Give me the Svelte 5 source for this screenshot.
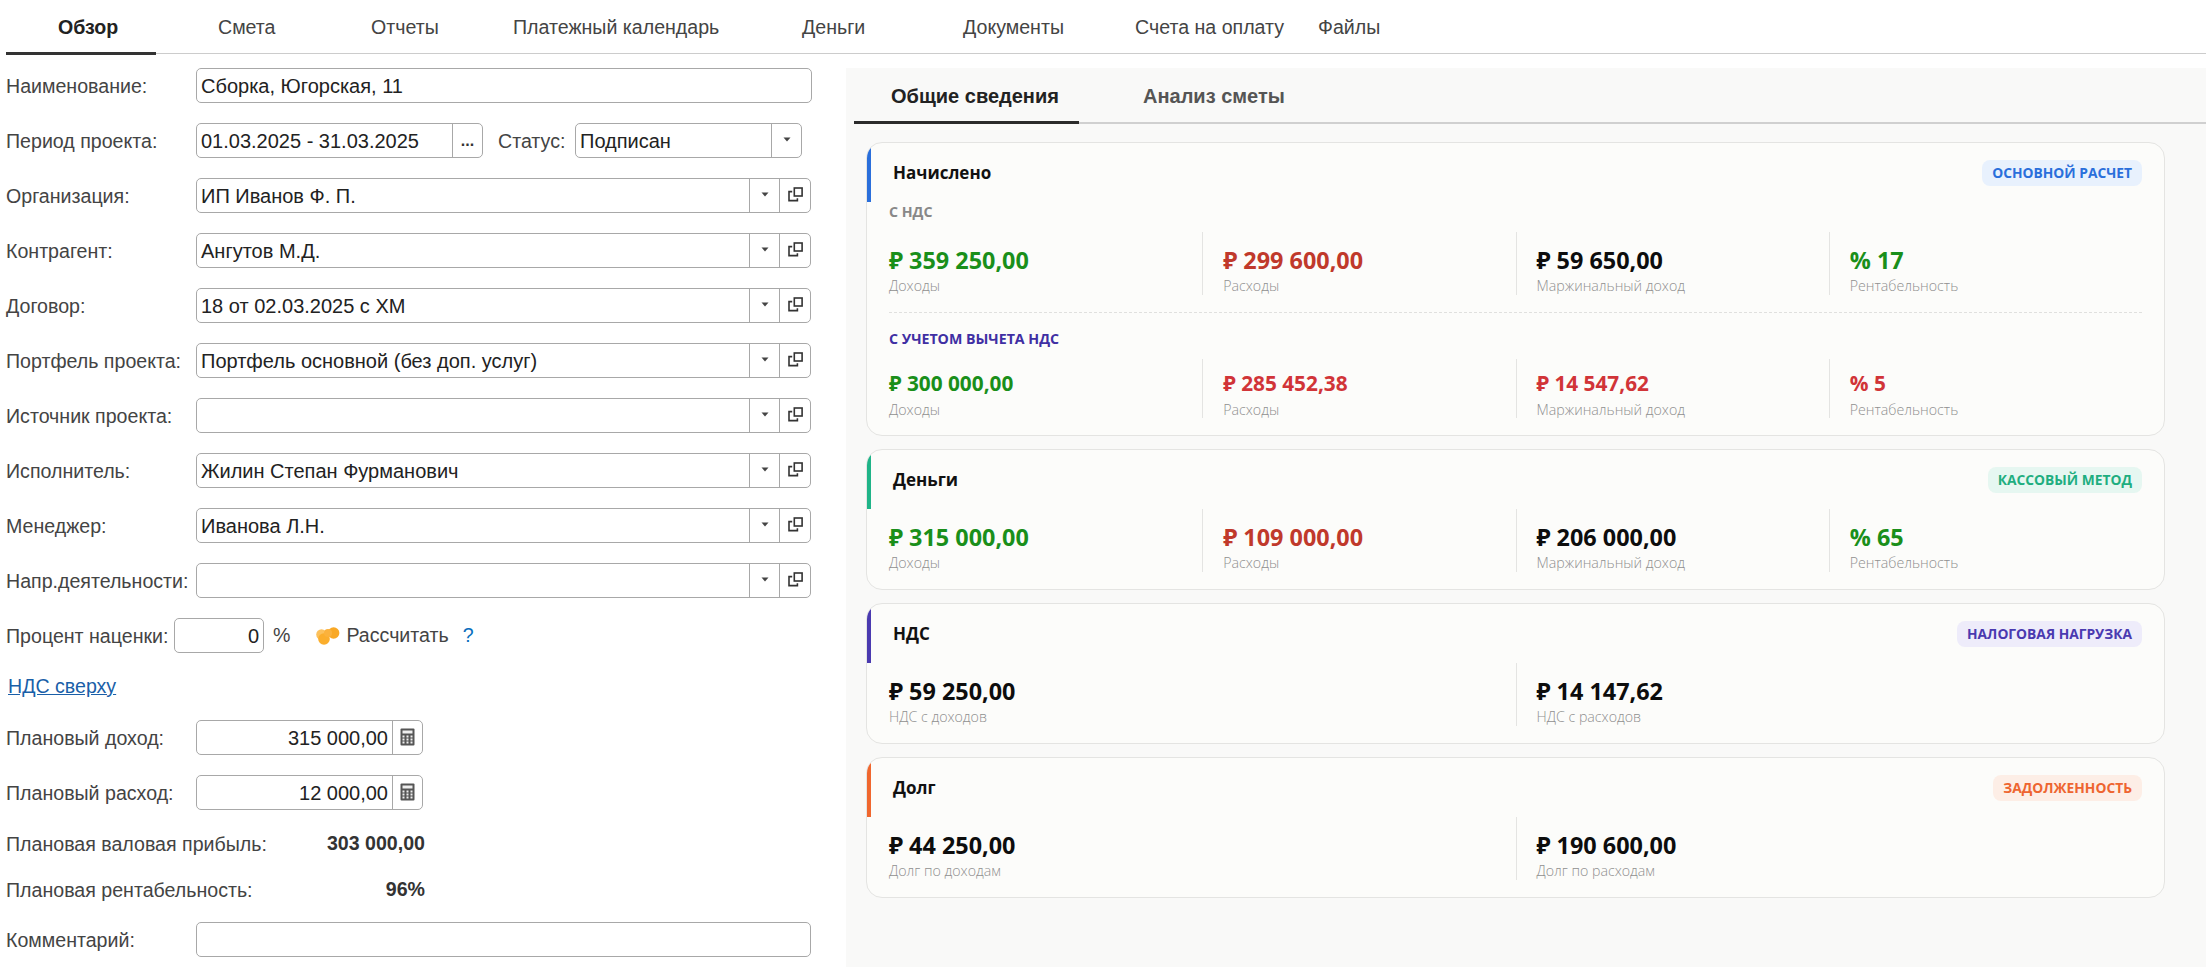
<script>
  const tabs = ['Обзор', 'Смета', 'Отчеты', 'Платежный календарь', 'Деньги', 'Документы', 'Счета на оплату', 'Файлы'];

  const combos1 = [
    ['Организация:', 'ИП Иванов Ф. П.'],
    ['Контрагент:', 'Ангутов М.Д.'],
    ['Договор:', '18 от 02.03.2025 с ХМ'],
    ['Портфель проекта:', 'Портфель основной (без доп. услуг)'],
    ['Источник проекта:', ''],
    ['Исполнитель:', 'Жилин Степан Фурманович'],
    ['Менеджер:', 'Иванова Л.Н.'],
    ['Напр.деятельности:', '']
  ];

  const margin = (a, b, c, d, colors = ['green', 'red', 'dark', 'green']) => [
    { v: '₽ ' + a, l: 'Доходы', c: colors[0] },
    { v: '₽ ' + b, l: 'Расходы', c: colors[1] },
    { v: '₽ ' + c, l: 'Маржинальный доход', c: colors[2] },
    { v: '% ' + d, l: 'Рентабельность', c: colors[3] }
  ];

  const cards = [
    {
      title: 'Начислено', badge: 'Основной расчет', tone: 'blue',
      sections: [
        { caption: 'С НДС', captionTone: 'muted', stats: margin('359 250,00', '299 600,00', '59 650,00', '17') },
        { caption: 'С учетом вычета НДС', captionTone: 'violet', small: true,
          stats: margin('300 000,00', '285 452,38', '14 547,62', '5', ['green', 'red2', 'red2', 'red2']) }
      ]
    },
    {
      title: 'Деньги', badge: 'Кассовый метод', tone: 'teal',
      sections: [{ stats: margin('315 000,00', '109 000,00', '206 000,00', '65') }]
    },
    {
      title: 'НДС', badge: 'Налоговая нагрузка', tone: 'purple',
      sections: [{ two: true, stats: [
        { v: '₽ 59 250,00', l: 'НДС с доходов', c: 'dark' },
        { v: '₽ 14 147,62', l: 'НДС с расходов', c: 'dark' }
      ] }]
    },
    {
      title: 'Долг', badge: 'Задолженность', tone: 'orange',
      sections: [{ two: true, stats: [
        { v: '₽ 44 250,00', l: 'Долг по доходам', c: 'dark' },
        { v: '₽ 190 600,00', l: 'Долг по расходам', c: 'dark' }
      ] }]
    }
  ];
</script>

{#snippet arrow()}
  <span class="btn"><svg width="8" height="5" viewBox="0 0 8 5"><path d="M0.5 0.5h7L4 4.5z" fill="#444" /></svg></span>
{/snippet}

{#snippet calc()}
  <span class="btn calc">
    <svg width="15" height="18" viewBox="0 0 15 18">
      <rect x="0.5" y="0.5" width="14" height="17" rx="1" fill="#555" />
      <rect x="2.5" y="2.5" width="10" height="3" fill="#eee" />
      <path d="M2.5 7.5h2v2h-2zM6.5 7.5h2v2h-2zM10.5 7.5h2v2h-2zM2.5 10.5h2v2h-2zM6.5 10.5h2v2h-2zM10.5 10.5h2v2h-2zM2.5 13.5h2v2h-2zM6.5 13.5h2v2h-2zM10.5 13.5h2v2h-2z" fill="#eee" />
    </svg>
  </span>
{/snippet}

<nav class="topnav">
  {#each tabs as t, i}
    <div class="toptab" class:active={i === 0}>{t}</div>
  {/each}
</nav>

<main class="layout">
  <section class="form">
    <div class="row">
      <span class="label">Наименование:</span>
      <div class="field wide"><span class="val">Сборка, Югорская, 11</span></div>
    </div>

    <div class="row">
      <span class="label">Период проекта:</span>
      <div class="field period">
        <span class="val">01.03.2025 - 31.03.2025</span>
        <span class="btn dots">...</span>
      </div>
      <span class="status-label">Статус:</span>
      <div class="field status">
        <span class="val">Подписан</span>
        {@render arrow()}
      </div>
    </div>

    {#each combos1 as [label, value]}
      <div class="row">
        <span class="label">{label}</span>
        <div class="field combo">
          <span class="val">{value}</span>
          {@render arrow()}
          <span class="btn open">
            <svg width="15" height="15" viewBox="0 0 15 15" fill="none" stroke="#333" stroke-width="1.6">
              <rect x="6.3" y="1" width="7.8" height="8" />
              <path d="M4.2 4.6H1v9h8.4v-2.4" />
            </svg>
          </span>
        </div>
      </div>
    {/each}

    <div class="row">
      <span class="label auto">Процент наценки:</span>
      <div class="field percent"><span class="val right">0</span></div>
      <span class="pct">%</span>
      <svg class="coins" width="24" height="18" viewBox="0 0 24 18">
        <circle cx="5.5" cy="7.5" r="5.3" fill="#fcc15c" />
        <circle cx="17.6" cy="6" r="5.8" fill="#f9a825" />
        <circle cx="8" cy="12" r="5.8" fill="#fbae2c" />
        <circle cx="12" cy="6" r="4" fill="#fbb23c" />
      </svg>
      <span class="calc-link">Рассчитать</span>
      <span class="help">?</span>
    </div>

    <a class="vat" href="#vat">НДС сверху</a>

    <div class="row">
      <span class="label">Плановый доход:</span>
      <div class="field money"><span class="val right">315 000,00</span>{@render calc()}</div>
    </div>
    <div class="row">
      <span class="label">Плановый расход:</span>
      <div class="field money"><span class="val right">12 000,00</span>{@render calc()}</div>
    </div>

    <div class="row plain">
      <span class="label">Плановая валовая прибыль:</span>
      <b class="total">303 000,00</b>
    </div>
    <div class="row plain">
      <span class="label">Плановая рентабельность:</span>
      <b class="total">96%</b>
    </div>

    <div class="row">
      <span class="label">Комментарий:</span>
      <div class="field combo"></div>
    </div>
  </section>

  <section class="panel">
    <div class="subtabs">
      <div class="subtab active">Общие сведения</div>
      <div class="subtab">Анализ сметы</div>
    </div>

    <div class="cards">
      {#each cards as card}
        <article class="card">
          <header class="card-head {card.tone}">
            <h3>{card.title}</h3>
            <span class="badge">{card.badge}</span>
          </header>
          {#each card.sections as s, i}
            {#if i > 0}<div class="dash"></div>{/if}
            {#if s.caption}
              <div class="caption {s.captionTone}">{s.caption}</div>
            {/if}
            <div class="stats" class:two={s.two} class:small={s.small}>
              {#each s.stats as st}
                <div class="stat">
                  <div class="value {st.c}">{st.v}</div>
                  <div class="desc">{st.l}</div>
                </div>
              {/each}
            </div>
          {/each}
        </article>
      {/each}
    </div>
  </section>
</main>

<style>
  :global(body) {
    margin: 0;
    background: #fff;
    font-family: "Liberation Sans", Arial, sans-serif;
    font-size: 19.6px;
    color: #333;
  }

  .topnav {
    display: grid;
    grid-template-columns: 212px 153px 142px 289px 161px 172px 183px 1fr;
    margin-left: 6px;
    height: 53px;
    border-bottom: 1px solid #ccc;
    box-sizing: content-box;
  }

  .toptab {
    position: relative;
    line-height: 54px;
    color: #444;
  }

  .toptab.active {
    font-weight: 700;
    color: #222;
    padding-left: 52px;
  }

  .toptab.active::after {
    content: '';
    position: absolute;
    left: 0;
    bottom: -1px;
    width: 150px;
    height: 3px;
    background: #333;
  }

  .layout {
    display: grid;
    grid-template-columns: 846px 1fr;
    margin-top: 14px;
    height: 899px;
    overflow: hidden;
  }

  .form {
    display: flex;
    flex-direction: column;
    gap: 20px;
    padding-left: 6px;
  }

  .row {
    display: flex;
    align-items: center;
    height: 35px;
  }

  .row.plain {
    height: 26px;
    width: 419px;
    justify-content: space-between;
  }

  .label {
    width: 190px;
    flex: none;
    color: #444;
    white-space: nowrap;
    padding-top: 2px;
  }

  .label.auto {
    width: 168px;
  }

  .field {
    display: flex;
    align-items: stretch;
    box-sizing: border-box;
    height: 35px;
    background: #fff;
    border: 1px solid #a8a8a8;
    border-radius: 5px;
    color: #222;
  }

  .wide { width: 616px; }
  .combo { width: 615px; }
  .period { width: 287px; }
  .status { width: 227px; }
  .percent { width: 90px; }
  .money { width: 227px; }

  .val {
    flex: 1;
    min-width: 0;
    padding: 0 4px;
    font-size: 20px;
    line-height: 34px;
    white-space: nowrap;
  }

  .val.right {
    text-align: right;
  }

  .btn {
    flex: none;
    width: 30px;
    display: flex;
    align-items: center;
    justify-content: center;
    border-left: 1px solid #a8a8a8;
    padding-bottom: 3px;
    box-sizing: border-box;
  }

  .open {
    width: 31px;
    padding-bottom: 2px;
  }

  .dots {
    font-weight: 700;
    font-size: 16px;
    color: #333;
    padding-bottom: 0;
  }

  .calc {
    padding-bottom: 2px;
  }

  .status-label {
    margin-left: 15px;
    width: 77px;
    color: #444;
    padding-top: 2px;
  }

  .pct {
    margin-left: 9px;
    color: #444;
  }

  .coins {
    margin-left: 26px;
  }

  .calc-link {
    margin-left: 6px;
    color: #444;
  }

  .help {
    margin-left: 14px;
    color: #0a6ebd;
  }

  .vat {
    margin-left: 2px;
    height: 27px;
    line-height: 27px;
    align-self: flex-start;
    color: #1a5fa8;
    text-decoration: underline;
  }

  .total {
    color: #333;
  }

  .panel {
    background: #f9f9f8;
    padding-left: 8px;
    font-family: "Open Sans", "Noto Sans", sans-serif;
  }

  .subtabs {
    display: flex;
    height: 56px;
    border-bottom: 2px solid #d0d0d0;
    box-sizing: border-box;
  }

  .subtab {
    position: relative;
    font-family: "Liberation Sans", Arial, sans-serif;
    font-size: 20px;
    font-weight: 700;
    line-height: 56px;
    color: #555;
    padding-left: 64px;
  }

  .subtab.active {
    width: 225px;
    box-sizing: border-box;
    padding-left: 37px;
    color: #222;
    border-bottom: 3px solid #2b2b2b;
    height: 56px;
  }

  .cards {
    display: flex;
    flex-direction: column;
    gap: 13px;
    margin: 18px 41px 0 12px;
  }

  .card {
    background: #fcfcfa;
    border: 1px solid #e4e4e2;
    border-radius: 16px;
    overflow: hidden;
    padding-bottom: 17px;
  }

  .card-head {
    display: flex;
    align-items: center;
    justify-content: space-between;
    height: 59px;
    box-sizing: border-box;
    padding: 0 22px 0 22px;
    border-left: 4px solid;
  }

  .card-head h3 {
    margin: 0;
    font-size: 17px;
    font-weight: 700;
    color: #111;
  }

  .badge {
    height: 26px;
    line-height: 26px;
    padding: 0 10px;
    border-radius: 8px;
    font-size: 13.8px;
    font-weight: 700;
    text-transform: uppercase;
  }

  .blue { border-left-color: #2a6fdb; }
  .blue .badge { background: #e8f1fd; color: #2a6fdb; }
  .teal { border-left-color: #1fb488; }
  .teal .badge { background: #e6f7f1; color: #1fae80; }
  .purple { border-left-color: #4a3ab0; }
  .purple .badge { background: #eeecfa; color: #4a3ab0; }
  .orange { border-left-color: #f0672e; }
  .orange .badge { background: #fdeee6; color: #ee6530; }

  .caption {
    margin: 0 22px 0 22px;
    height: 20px;
    line-height: 20px;
    font-size: 14.2px;
    font-weight: 700;
    text-transform: uppercase;
  }

  .caption.muted { color: #888; margin-bottom: 10px; margin-top: 0; }
  .caption.violet { color: #3f2fa3; margin-bottom: 10px; margin-top: 16px; }

  .dash {
    margin: 17px 22px 0;
    border-top: 1px dashed #e0e0de;
  }

  .stats {
    display: grid;
    grid-template-columns: repeat(4, 1fr);
    margin: 0 22px;
  }

  .stats.two {
    grid-template-columns: repeat(2, 1fr);
  }

  .stat {
    height: 63px;
    padding: 14px 0 0 20px;
    box-sizing: border-box;
    border-left: 1px solid #e4e4e2;
  }

  .stat:first-child {
    padding-left: 0;
    border-left: 0;
  }

  .value {
    font-size: 23.4px;
    font-weight: 700;
    line-height: 29px;
    white-space: nowrap;
  }

  .small .value {
    font-size: 20.8px;
    line-height: 25px;
  }

  .small .stat {
    height: 59px;
    padding-top: 12px;
  }

  .small .desc {
    margin-top: 5px;
  }

  .desc {
    font-size: 14.2px;
    font-weight: 300;
    line-height: 18px;
    margin-top: 2px;
    color: #8f8f8f;
  }

  .green { color: #1a8f1a; }
  .red { color: #c0392b; }
  .red2 { color: #d13438; }
  .dark { color: #0d0d0d; }
</style>
